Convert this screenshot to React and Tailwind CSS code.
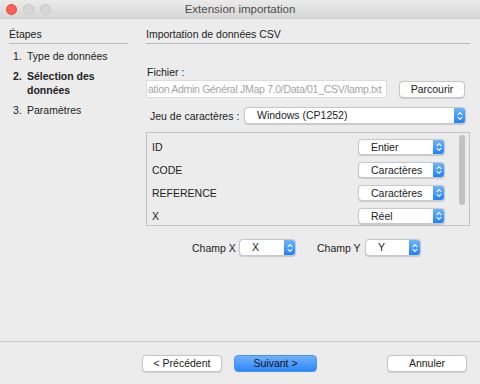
import React from 'react';

function Stepper() {
  // blue double-arrow part of a macOS popup button
  return (
    <div className="flex h-full w-[11px] items-center justify-center rounded-r-[3px] bg-gradient-to-b from-[#6cb3fa] to-[#1a82fb]">
      <svg width="6" height="10" viewBox="0 0 6 10" fill="none" stroke="white" strokeWidth="1.1" strokeLinecap="round" strokeLinejoin="round">
        <path d="M1 3.6 L3 1.6 L5 3.6" />
        <path d="M1 6.4 L3 8.4 L5 6.4" />
      </svg>
    </div>
  );
}

function Popup({ value, className }) {
  return (
    <div className={`flex items-stretch rounded-[4px] border border-[#c8c8c8] bg-white shadow-[0_0.5px_1px_rgba(0,0,0,0.15)] ${className}`}>
      <div className="flex flex-1 items-center pl-[12px] text-[10.5px] leading-none text-[#222]">{value}</div>
      <Stepper />
    </div>
  );
}

function Button({ children, className, primary }) {
  return primary ? (
    <div className={`flex h-[17px] items-center justify-center rounded-[4px] border border-[#4a94f0] bg-gradient-to-b from-[#6fb0fb] to-[#2a86fa] text-[10.5px] leading-none text-[#111] ${className}`}>
      {children}
    </div>
  ) : (
    <div className={`flex h-[17px] items-center justify-center rounded-[4px] border border-[#c6c6c6] bg-white text-[10.5px] leading-none text-[#222] shadow-[0_0.5px_1px_rgba(0,0,0,0.12)] ${className}`}>
      {children}
    </div>
  );
}

const rows = [
  ['ID', 'Entier'],
  ['CODE', 'Caractères'],
  ['REFERENCE', 'Caractères'],
  ['X', 'Réel'],
];

export default function App() {
  return (
    <div className="flex h-[384px] w-[480px] flex-col overflow-hidden bg-[#ececec] text-[10.5px] leading-[14px] text-[#222]" style={{ fontFamily: '"Liberation Sans", Arial, sans-serif' }}>
      {/* Title bar */}
      <div className="relative flex h-[19px] shrink-0 items-center justify-center border-b border-[#d0d0d0] bg-gradient-to-b from-[#ebebeb] to-[#d6d6d6]">
        <div className="absolute left-[6px] top-[4px] flex gap-[6px]">
          <div className="h-[11px] w-[11px] rounded-full border border-[#e24b41] bg-[#fc5f57]" />
          <div className="h-[11px] w-[11px] rounded-full border border-[#c9c9c9] bg-[#d6d6d6]" />
          <div className="h-[11px] w-[11px] rounded-full border border-[#c9c9c9] bg-[#d6d6d6]" />
        </div>
        <span className="text-[11.5px] text-[#4d4d4d]">Extension importation</span>
      </div>

      <div className="flex flex-1">
        {/* Steps */}
        <div className="w-[138px] shrink-0 pl-[9px] pr-[10px] pt-[8px]">
          <div className="border-b border-[#b9b9b9] pb-[2px]">Étapes</div>
          <div className="mt-[5px] flex flex-col gap-[6px] pl-[4px]">
            <div className="flex"><span className="w-[14px]">1.</span><span>Type de données</span></div>
            <div className="flex font-bold"><span className="w-[14px]">2.</span><span>Sélection des<br />données</span></div>
            <div className="flex"><span className="w-[14px]">3.</span><span>Paramètres</span></div>
          </div>
        </div>

        {/* Main */}
        <div className="flex-1 pl-[8px] pr-[10px] pt-[8px]">
          <div className="border-b border-[#b9b9b9] pb-[2px]">Importation de données CSV</div>

          <div className="mt-[21px] pl-[1px]">Fichier :</div>
          <div className="mt-[1px] flex items-center">
            <div className="flex h-[18px] w-[241px] items-center overflow-hidden whitespace-nowrap border border-[#dcdcdc] bg-white pl-[1px] text-[#a5a5a5]">
              <span className="tracking-[-0.3px]">ation Admin Général JMap 7.0/Data/01_CSV/lamp.txt</span>
            </div>
            <Button className="ml-[12px] w-[66px]">Parcourir</Button>
          </div>

          <div className="mt-[9px] flex items-center">
            <span className="ml-[4px] w-[94px]">Jeu de caractères :</span>
            <Popup value="Windows (CP1252)" className="h-[17px] w-[222px]" />
          </div>

          {/* Fields table */}
          <div className="mt-[8px] flex h-[94px] border border-[#c4c4c4] bg-[#ececec]">
            <div className="flex flex-1 flex-col gap-[7px] pl-[5px] pt-[6px]">
              {rows.map(([name, type]) => (
                <div key={name} className="flex h-[16px] items-center">
                  <span className="flex-1">{name}</span>
                  <Popup value={type} className="h-[16px] w-[87px]" />
                </div>
              ))}
            </div>
            <div className="ml-[11px] w-[13px] pl-[3px] pt-[2px]">
              <div className="h-[70px] w-[6px] rounded-full bg-[#c1c1c1]" />
            </div>
          </div>

          <div className="mt-[13px] flex items-center pl-[46px]">
            <span className="w-[47px]">Champ X</span>
            <Popup value="X" className="h-[17px] w-[57px]" />
            <span className="ml-[21px] w-[48px]">Champ Y</span>
            <Popup value="Y" className="h-[17px] w-[56px]" />
          </div>
        </div>
      </div>

      {/* Footer */}
      <div className="h-[43px] shrink-0 border-t border-[#c8c8c8]">
        <div className="flex items-center pt-[13px]">
          <Button className="ml-[142px] w-[80px]">&lt; Précédent</Button>
          <Button primary className="ml-[12px] w-[83px]">Suivant &gt;</Button>
          <Button className="ml-[70px] w-[80px]">Annuler</Button>
        </div>
      </div>
    </div>
  );
}
